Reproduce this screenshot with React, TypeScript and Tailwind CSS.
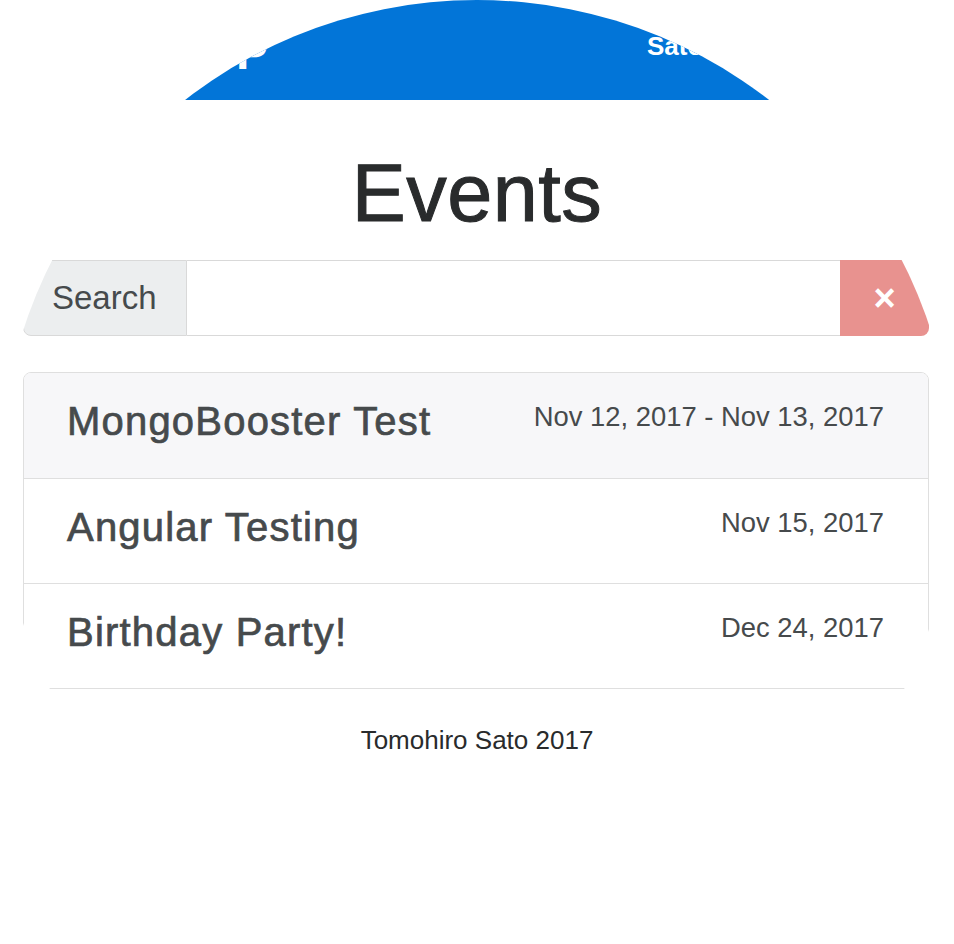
import React from 'react';

type EventItem = {
  title: string;
  date: string;
  active?: boolean;
};

const events: EventItem[] = [
  { title: 'MongoBooster Test', date: 'Nov 12, 2017 - Nov 13, 2017', active: true },
  { title: 'Angular Testing', date: 'Nov 15, 2017' },
  { title: 'Birthday Party!', date: 'Dec 24, 2017' },
];

export default function App() {
  return (
    <div className="h-[944px] w-[954px] overflow-hidden bg-white">
      {/* round viewport, everything outside it stays white */}
      <div className="h-[954px] w-[954px] overflow-hidden rounded-full bg-white font-['Liberation_Sans',Arial,sans-serif]">
        {/* Navbar */}
        <nav className="flex h-[100px] items-start bg-[#0275d8] text-white">
          <span className="ml-[236px] mt-[29px] text-[48px] font-bold leading-none">P</span>
          <span className="ml-[379px] mt-[33px] text-[26px] font-bold leading-none">Sato</span>
        </nav>

        {/* Title */}
        <h1 className="mt-[49px] text-center text-[81px] leading-[89px] tracking-[0.5px] text-[#292b2c] [-webkit-text-stroke:1px_#292b2c]">
          Events
        </h1>

        {/* Search */}
        <div className="ml-[23px] mt-[22px] flex h-[76px] w-[906px]">
          <div className="flex w-[164px] items-center rounded-l-[8px] border border-[#d9d9d9] bg-[#eceeef] pl-[28px] text-[33px] text-[#464a4c]">
            Search
          </div>
          <input
            type="text"
            className="min-w-0 flex-1 border-y border-[#d9d9d9] bg-white px-4 text-[32px] outline-none"
          />
          <button className="flex w-[89px] items-center justify-center rounded-r-[8px] bg-[#e8928f] text-[38px] font-bold leading-none text-white">
            ×
          </button>
        </div>

        {/* Event list */}
        <div className="ml-[23px] mt-[36px] w-[906px] overflow-hidden rounded-[8px] border border-[#dfdfdf]">
          {events.map((ev, i) => (
            <div
              key={ev.title}
              className={`flex h-[105px] items-start justify-between pl-[43px] pr-[44px] pt-[26px] ${
                i > 0 ? 'border-t border-[#dfdfdf]' : ''
              } ${ev.active ? 'bg-[#f7f7f9]' : 'bg-white'}`}
            >
              <span className="text-[40px] leading-[44px] tracking-[1.2px] text-[#464a4c] [-webkit-text-stroke:0.7px_#464a4c]">
                {ev.title}
              </span>
              <span className="text-[27.4px] leading-[36px] text-[#464a4c]">{ev.date}</span>
            </div>
          ))}
        </div>

        {/* Footer */}
        <footer className="mt-[32px] text-center text-[26px] leading-[39px] text-[#292b2c]">
          Tomohiro Sato 2017
        </footer>
      </div>
    </div>
  );
}
